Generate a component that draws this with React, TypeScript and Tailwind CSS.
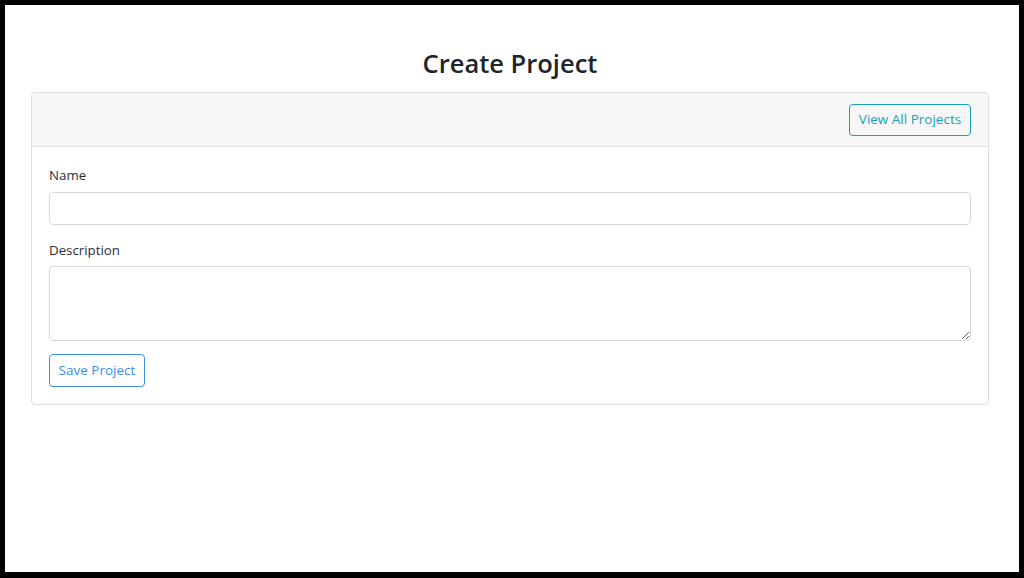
import React from "react";

export default function App() {
  return (
    <div
      className="w-[1024px] h-[578px] bg-black pt-[5px] pl-[5px] pr-[5px] pb-[6px] flex flex-col"
      style={{ fontFamily: '"Open Sans", "Noto Sans", sans-serif' }}
    >
      <div className="flex-1 bg-white pl-[26px] pr-[30px] pt-[42px]">
        <h1 className="text-center text-[25.5px] leading-[32px] font-semibold text-[#212529] mb-[13px]">
          Create Project
        </h1>
        <div className="border border-[#dfdfdf] rounded-[4px] bg-white">
          <div className="h-[54px] bg-[#f7f7f7] border-b border-[#dfdfdf] flex items-center justify-end px-[17px] rounded-t-[4px]">
            <button className="h-[32px] w-[122px] border border-[#17a2b8] rounded-[4px] text-[#17a2b8] text-[13.5px] bg-transparent">
              View All Projects
            </button>
          </div>
          <div className="px-[17px] pt-[18px] pb-[17px]">
            <label className="block text-[13.3px] leading-[20px] text-[#2b2f33] mb-[7px]">Name</label>
            <input
              type="text"
              className="block w-full h-[33px] border border-[#d6dadf] rounded-[4px] outline-none"
            />
            <label className="block text-[13.3px] leading-[20px] text-[#2b2f33] mt-[15px] mb-[6px]">
              Description
            </label>
            <textarea className="block w-full h-[75px] border border-[#d6dadf] rounded-[4px] outline-none resize-y" />
            <button className="mt-[13px] h-[33px] w-[96px] border border-[#3b8eea] rounded-[4px] text-[#3b8eea] text-[13.5px] bg-transparent">
              Save Project
            </button>
          </div>
        </div>
      </div>
    </div>
  );
}
